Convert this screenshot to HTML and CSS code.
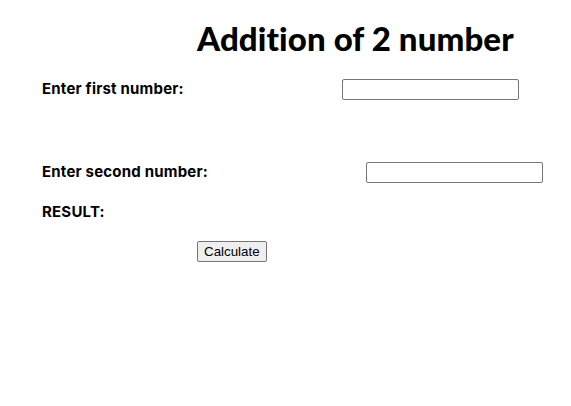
FILE: index.html
```html
<!DOCTYPE html>
<html>
<head>
<meta charset="utf-8">
<link rel="stylesheet" href="styles.css">
</head>
<body>
<div class="page">
  <h1 class="title">Addition of 2 number</h1>
  <div class="row row-first">
    <label class="label" for="n1">Enter first number:</label>
    <input class="field" id="n1" type="text">
  </div>
  <div class="row row-second">
    <label class="label" for="n2">Enter second number:</label>
    <input class="field" id="n2" type="text">
  </div>
  <div class="row row-result">
    <span class="label">RESULT:</span>
  </div>
  <div class="actions">
    <button class="btn" type="button">Calculate</button>
  </div>
</div>
</body>
</html>
```

FILE: styles.css
```css
html, body {
  margin: 0;
  padding: 0;
  background: #fff;
}
.page {
  padding: 18px 0 0 42px;
  font-family: Lato, "Noto Sans", sans-serif;
  font-variant-ligatures: none;
  color: #000;
}
.title {
  margin: 0 0 0 155px;
  font-size: 33px;
  font-weight: 900;
  letter-spacing: 0.1px;
  line-height: 40px;
  height: 40px;
}
.row {
  display: flex;
  align-items: center;
  height: 21px;
}
.row-first {
  margin-top: 21px;
}
.row-second {
  margin-top: 62px;
}
.row-result {
  margin-top: 19px;
}
.label {
  font-family: Inter, "Noto Sans", sans-serif;
  font-size: 15px;
  font-weight: 700;
  letter-spacing: 0.2px;
  line-height: 18px;
  margin-right: 158px;
  margin-top: -1px;
}
.field {
  box-sizing: border-box;
  width: 177px;
  height: 21px;
  margin: 0;
  border: 1px solid #767676;
  border-radius: 2px;
  padding: 1px 2px;
  font-size: 13.33px;
}
.actions {
  margin: 18px 0 0 155px;
}
.btn {
  box-sizing: border-box;
  height: 21px;
  margin: 0;
  font-family: Arial, "Liberation Sans", sans-serif;
  font-size: 13.33px;
  padding: 1px 6px;
  border: 1px solid #767676;
  border-radius: 2px;
  background: #efefef;
  color: #000;
  display: block;
}
```
